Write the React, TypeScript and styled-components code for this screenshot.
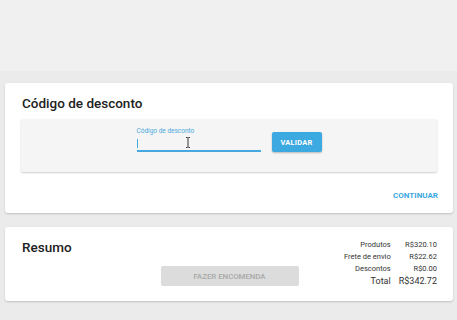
import React from "react";
import styled, { createGlobalStyle } from "styled-components";

const Global = createGlobalStyle`
  html, body { margin: 0; padding: 0; }
  body {
    background: #ebebeb;
    font-family: Roboto, "Liberation Sans", Arial, sans-serif;
    color: #222;
    width: 457px;
    height: 320px;
    overflow: hidden;
  }
`;

const Header = styled.div`
  height: 71px;
  background: #f0f0f0;
`;

const Main = styled.main`
  display: flex;
  flex-direction: column;
  gap: 14px;
  padding: 12px 4px 0 5px;
`;

const Card = styled.section`
  background: #fff;
  border-radius: 3px;
  box-shadow: 0 1px 2px rgba(0, 0, 0, 0.18);
  padding: 11px 16px 12px 17px;
  box-sizing: border-box;
`;

const Title = styled.h2`
  margin: 0 0 6px;
  font-size: 13.5px;
  line-height: 19px;
  font-weight: 500;
  color: #212121;
`;

const Inset = styled.div`
  background: #f5f5f5;
  border-radius: 2px;
  box-shadow: 0 1px 2px rgba(0, 0, 0, 0.2);
  margin-left: -1px;
  height: 53px;
  box-sizing: border-box;
  display: flex;
  justify-content: center;
  align-items: flex-end;
  gap: 11px;
  padding-bottom: 20px;
`;

const Field = styled.label`
  position: relative;
  width: 124px;
  display: flex;
  flex-direction: column;
`;

const FieldLabel = styled.span`
  font-size: 6.5px;
  line-height: 8px;
  color: #4aa9dd;
`;

const FieldInput = styled.div`
  height: 13px;
  border-bottom: 2px solid #45a8de;
  margin-top: 2px;
  display: flex;
  align-items: center;
`;

const Caret = styled.span`
  width: 1px;
  height: 9px;
  background: #45a8de;
`;

const Pointer = styled.svg`
  position: absolute;
  left: 48px;
  top: 10px;
`;

const PrimaryButton = styled.button`
  width: 50px;
  height: 20px;
  border: none;
  border-radius: 2px;
  background: #3ca9e0;
  color: #fff;
  font-family: inherit;
  font-size: 7.5px;
  font-weight: 700;
  letter-spacing: 0.2px;
  box-shadow: 0 1px 2px rgba(0, 0, 0, 0.25);
  padding: 0;
`;

const Actions = styled.div`
  display: flex;
  justify-content: flex-end;
  margin-top: 19px;
`;

const TextButton = styled.button`
  background: none;
  border: none;
  padding: 0;
  margin-right: -1px;
  color: #3ba8df;
  font-family: inherit;
  font-size: 8px;
  line-height: 10px;
  font-weight: 700;
`;

const SummaryCard = styled(Card)`
  display: grid;
  grid-template-columns: 1fr auto 1fr;
  padding: 12px 16px 14px 17px;
`;

const SummaryTitle = styled(Title)`
  margin: 0;
  align-self: start;
  margin-top: -1px;
`;

const DisabledButton = styled.button`
  align-self: end;
  width: 138px;
  height: 20px;
  margin-bottom: 1px;
  border: none;
  border-radius: 2px;
  background: #dcdcdc;
  color: #a8a8a8;
  font-family: inherit;
  font-size: 7.8px;
  font-weight: 500;
  padding: 0;
`;

const Totals = styled.dl`
  justify-self: end;
  margin: 0;
  display: grid;
  grid-template-columns: auto auto;
  column-gap: 8px;
  align-items: center;
`;

const Term = styled.dt<{ $big?: boolean }>`
  text-align: right;
  font-size: ${(p) => (p.$big ? "9px" : "7.5px")};
  line-height: 12px;
  color: #333;
`;

const Value = styled.dd<{ $big?: boolean }>`
  margin: 0;
  text-align: right;
  font-size: ${(p) => (p.$big ? "9px" : "7.5px")};
  line-height: 12px;
  color: #333;
`;

const rows = [
  { label: "Produtos", value: "R$320.10" },
  { label: "Frete de envio", value: "R$22.62" },
  { label: "Descontos", value: "R$0.00" },
  { label: "Total", value: "R$342.72", big: true },
];

export default function App() {
  return (
    <>
      <Global />
      <Header />
      <Main>
        <Card>
          <Title>Código de desconto</Title>
          <Inset>
            <Field>
              <FieldLabel>Código de desconto</FieldLabel>
              <FieldInput>
                <Caret />
              </FieldInput>
              <Pointer width="6" height="11" viewBox="0 0 6 11">
                <path
                  d="M1 0.5h1.3l0.7 0.7 0.7-0.7H5M3 1.2v8.6M1 10.5h1.3l0.7-0.7 0.7 0.7H5"
                  fill="none"
                  stroke="#222"
                  strokeWidth="0.9"
                />
              </Pointer>
            </Field>
            <PrimaryButton>VALIDAR</PrimaryButton>
          </Inset>
          <Actions>
            <TextButton>CONTINUAR</TextButton>
          </Actions>
        </Card>
        <SummaryCard>
          <SummaryTitle>Resumo</SummaryTitle>
          <DisabledButton disabled>FAZER ENCOMENDA</DisabledButton>
          <Totals>
            {rows.map((r) => (
              <React.Fragment key={r.label}>
                <Term $big={r.big}>{r.label}</Term>
                <Value $big={r.big}>{r.value}</Value>
              </React.Fragment>
            ))}
          </Totals>
        </SummaryCard>
      </Main>
    </>
  );
}
